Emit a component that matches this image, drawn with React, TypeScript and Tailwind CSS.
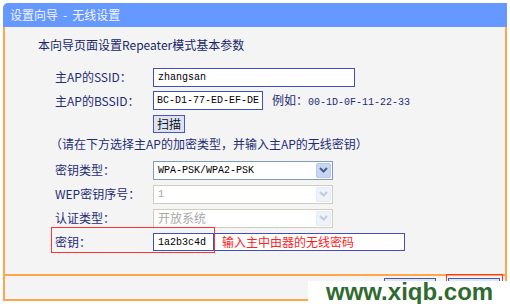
const CJK = { fontFamily: '"Noto Sans CJK SC", sans-serif' };
const MONO = { fontFamily: '"Liberation Mono", "Noto Sans CJK SC", monospace' };

function Chevron({ color }: { color: string }) {
  return (
    <svg width="9" height="6" viewBox="0 0 9 6">
      <path d="M1 1 L4.5 4.5 L8 1" fill="none" stroke={color} strokeWidth="2" />
    </svg>
  );
}

function Select({ value, disabled }: { value: string; disabled?: boolean }) {
  return (
    <div
      className={`flex h-[19px] w-[180px] items-stretch border bg-white ${
        disabled ? "border-[#cfcdc0]" : "border-[#7f9db9]"
      }`}
    >
      <div
        className={`flex flex-1 items-center pl-[4px] text-[12px] ${
          disabled ? "text-[#a8a8a8]" : "text-black"
        }`}
        style={value === "开放系统" ? CJK : MONO}
      >
        <span className={value === "开放系统" ? "" : "text-[10px]"}>{value}</span>
      </div>
      <div
        className={`m-px flex w-[15px] items-center justify-center rounded-[2px] border ${
          disabled ? "border-[#e3eaf6] bg-[#eef3fb]" : "border-[#b6c8ec] bg-[#c6d6f4]"
        }`}
      >
        <Chevron color={disabled ? "#c3cad8" : "#4d5f84"} />
      </div>
    </div>
  );
}

function Row({ label, h, children }: { label: string; h: string; children?: React.ReactNode }) {
  return (
    <div className={`flex items-center ${h}`}>
      <div className="w-[98px] text-[12px] text-[#1d2c78]">{label}</div>
      {children}
    </div>
  );
}

export default function App() {
  return (
    <div className="relative h-[304px] w-[510px] overflow-hidden bg-white" style={CJK}>
      <div className="ml-[3px] mt-[3px] flex h-[24px] w-[504px] items-center rounded-tl-[5px] bg-[#6699ff] pl-[7px] text-[12px] text-[#f2f5ff]">
        设置向导<span className="mx-[5px]">-</span>无线设置
      </div>

      <div className="ml-[3px] h-[247px] w-[504px] border-x-2 border-[#ffa64d] bg-[#f4f4f4]">
        <div className="pl-[33px] pt-[9px] text-[12px] leading-[17px] text-[#16256a]">
          本向导页面设置Repeater模式基本参数
        </div>

        <div className="mt-[12px] pl-[50px]">
          <Row label="主AP的SSID：" h="h-[24px]">
            <div className="flex h-[19px] w-[202px] items-center border border-[#4050b8] bg-white pl-[4px] text-[10px] text-black" style={MONO}>
              zhangsan
            </div>
          </Row>
          <Row label="主AP的BSSID：" h="h-[23px]">
            <div className="flex h-[19px] w-[110px] items-center border border-[#4050b8] bg-white pl-[3px] text-[10px] text-black" style={MONO}>
              BC-D1-77-ED-EF-DE
            </div>
            <span className="ml-[9px] text-[12px] text-[#1d2c78]">
              例如：<span className="text-[10px]" style={MONO}>00-1D-0F-11-22-33</span>
            </span>
          </Row>
          <Row label="" h="h-[23px]">
            <button className="flex h-[18px] w-[32px] items-center justify-center border border-[#4a58b0] bg-[#dde3f5] text-[12px] text-[#111]">
              扫描
            </button>
          </Row>
          <div className="-ml-[5px] flex h-[18px] items-center text-[12px] text-[#1d2c78]">
            （请在下方选择主AP的加密类型，并输入主AP的无线密钥）
          </div>
          <div className="mt-[5px]">
            <Row label="密钥类型：" h="h-[24px]">
              <Select value="WPA-PSK/WPA2-PSK" />
            </Row>
            <Row label="WEP密钥序号：" h="h-[24px]">
              <Select value="1" disabled />
            </Row>
            <Row label="认证类型：" h="h-[24px]">
              <Select value="开放系统" disabled />
            </Row>
            <Row label="密钥：" h="h-[24px]">
              <div className="flex h-[18px] w-[61px] items-center border border-[#4050b8] bg-white pl-[4px] text-[10px] text-black" style={MONO}>
                1a2b3c4d
              </div>
              <div className="-ml-px flex h-[18px] w-[192px] items-center border border-[#4050b8] bg-white pl-[8px] text-[12px] text-[#ff2222]">
                输入主中由器的无线密码
              </div>
            </Row>
          </div>
        </div>
      </div>

      <div className="ml-[3px] flex h-[27px] w-[504px] justify-end gap-[12px] border-x-2 border-y-2 border-[#ffa64d] bg-[#f4f4f4] pr-[5px] pt-[2px]">
        <button className="h-[22px] w-[52px] border border-[#4a58b0] bg-[#dfe6f5]" />
        <button className="h-[22px] w-[52px] border border-[#4a58b0] bg-[#dfe6f5]" />
      </div>

      <div className="absolute left-[51px] top-[227px] h-[26px] w-[164px] border border-[#ff3333]" />
      <div className="absolute left-[446px] top-[274px] h-[30px] w-[57px] border border-[#ff3333]" />

      <div className="absolute left-[308px] top-[281px] flex h-[23px] w-[202px] items-end bg-white pl-[18px]">
        <span
          className="text-[24px] font-bold leading-[24px] text-[#2f6b2f]"
          style={{ fontFamily: '"Liberation Sans", Arial, sans-serif' }}
        >
          www.xiqb.com
        </span>
      </div>
    </div>
  );
}
